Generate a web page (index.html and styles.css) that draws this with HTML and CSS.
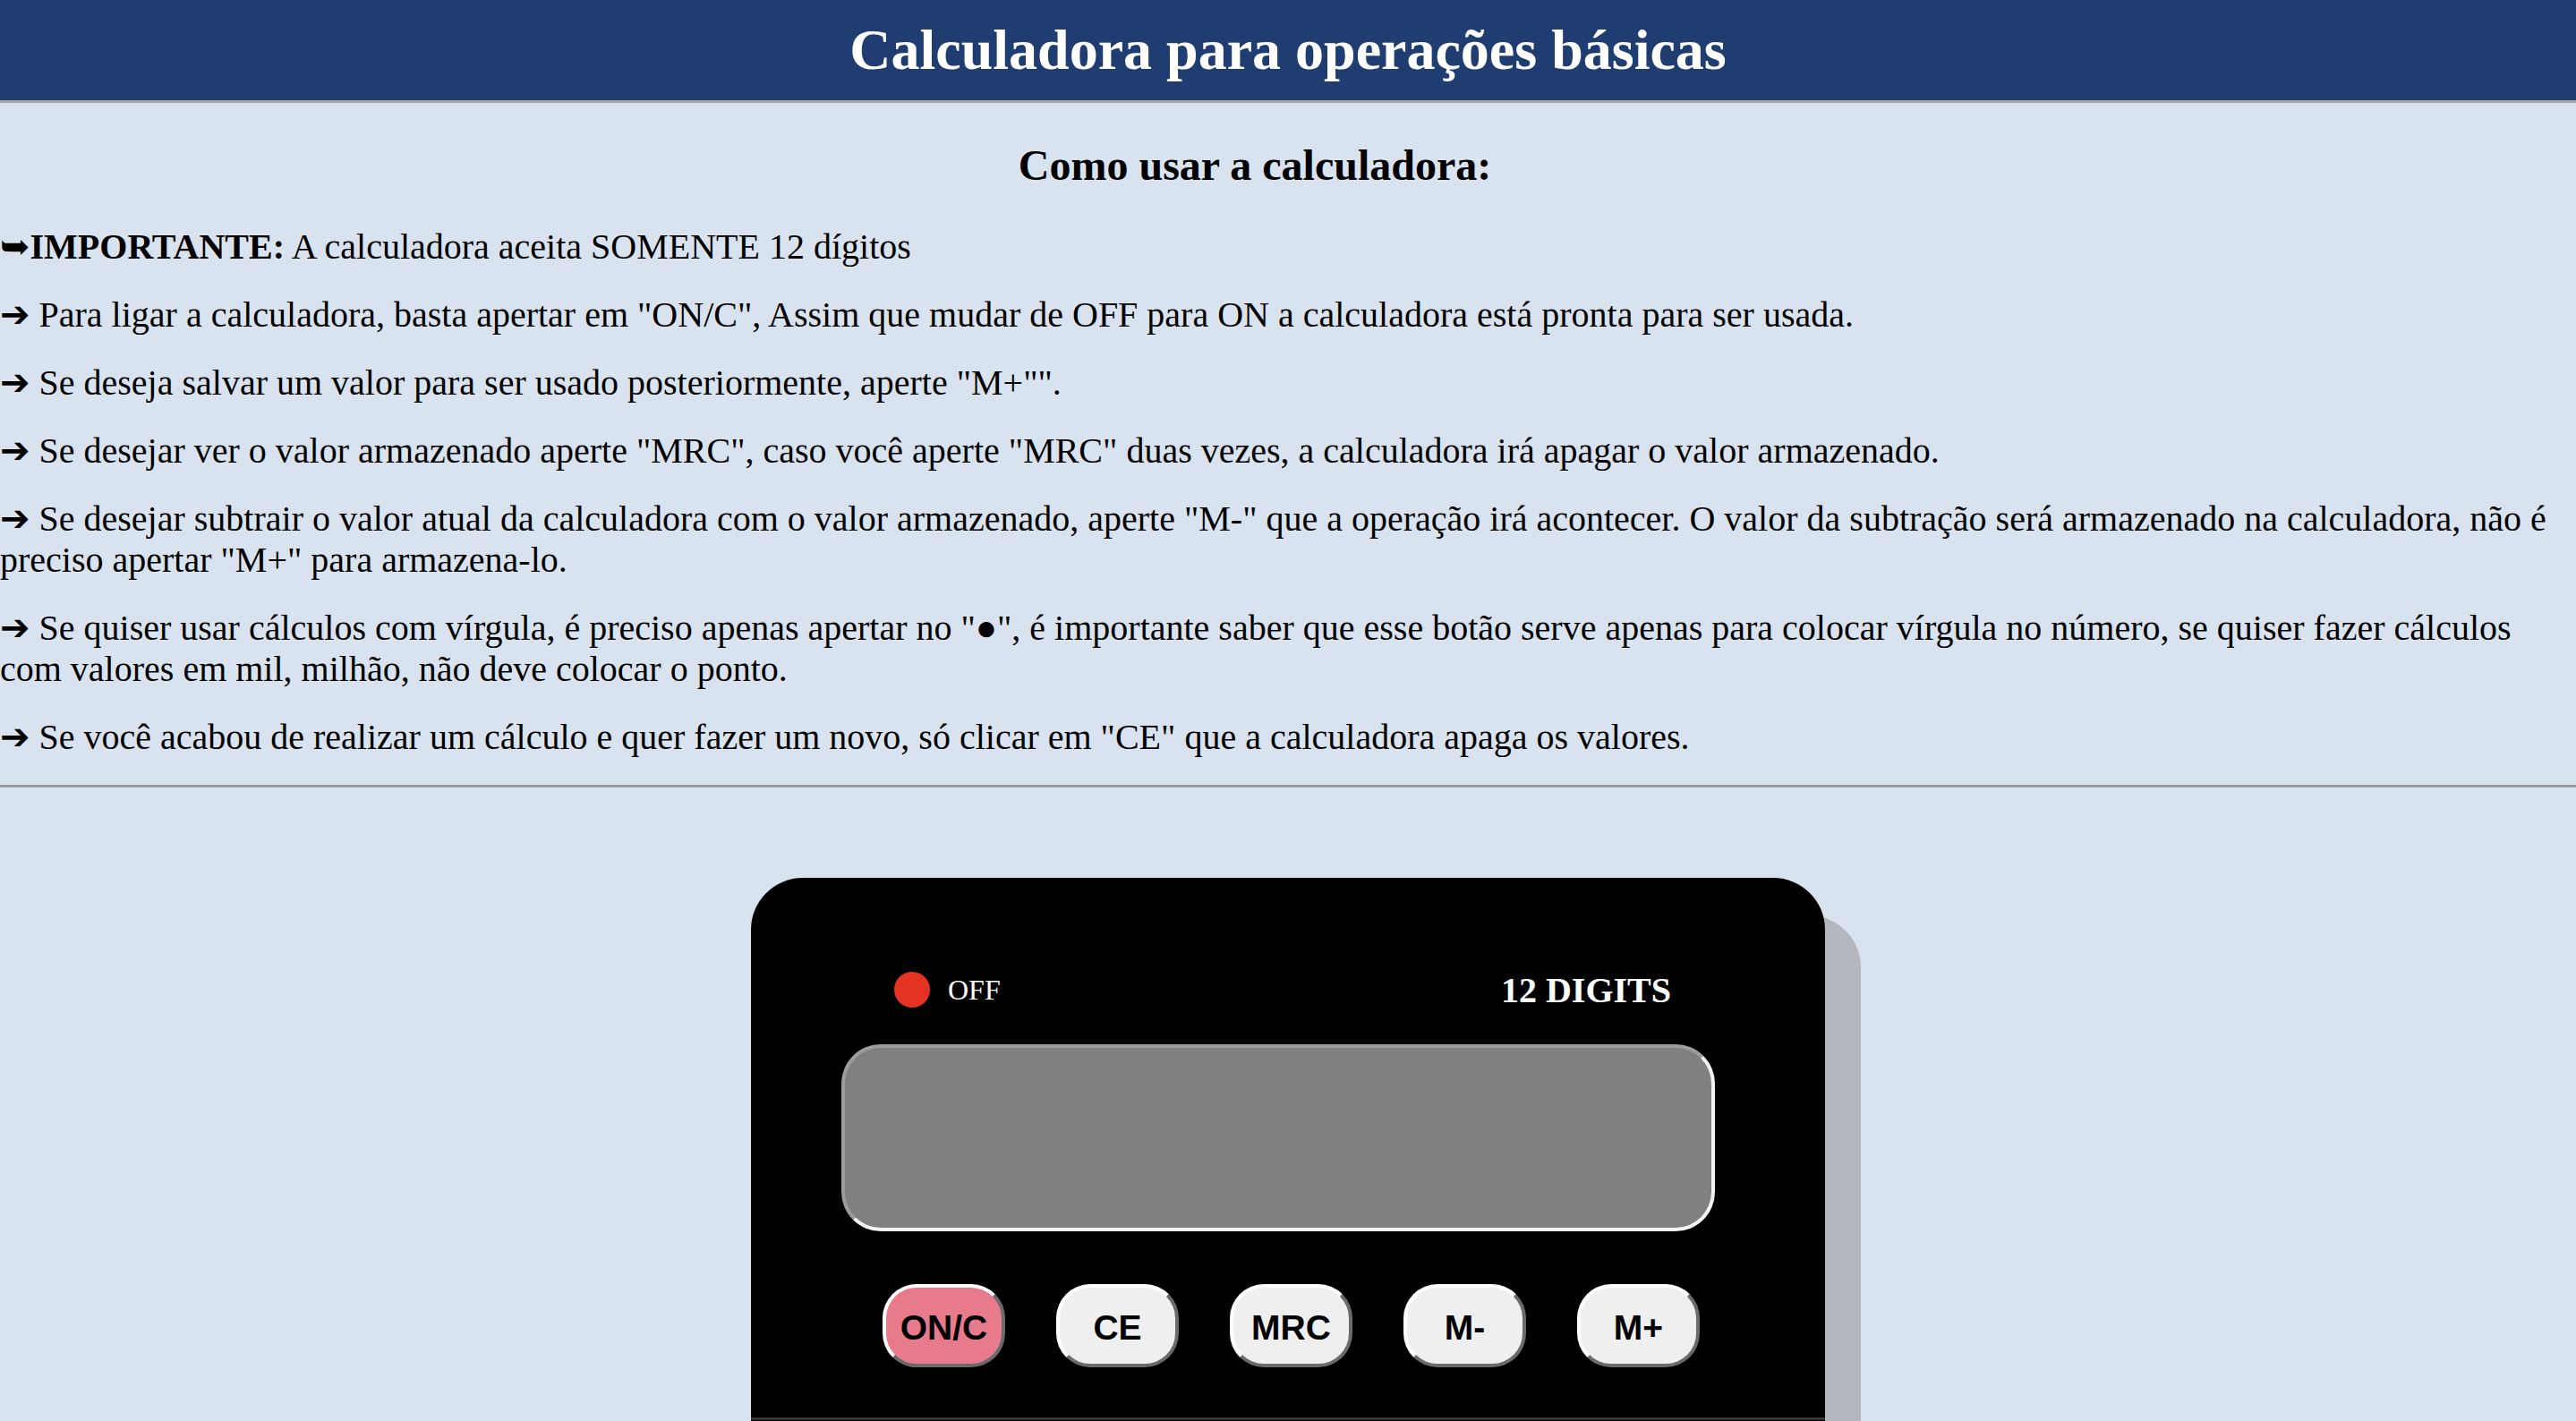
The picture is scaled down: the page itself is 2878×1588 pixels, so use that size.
FILE: index.html
```html
<!DOCTYPE html>
<html lang="pt-BR">
<head>
<meta charset="utf-8">
<title>Calculadora para operações básicas</title>
<link rel="stylesheet" href="styles.css">
</head>
<body>
<header class="topbar">
  <h1 class="title">Calculadora para operações básicas</h1>
</header>
<section class="guide">
  <h2 class="guide-title">Como usar a calculadora:</h2>
  <p class="tip"><span class="arrow">➥</span><strong>IMPORTANTE:</strong> A calculadora aceita SOMENTE 12 dígitos</p>
  <p class="tip"><span class="arrow">➔</span> Para ligar a calculadora, basta apertar em "ON/C", Assim que mudar de OFF para ON a calculadora está pronta para ser usada.</p>
  <p class="tip"><span class="arrow">➔</span> Se deseja salvar um valor para ser usado posteriormente, aperte "M+"".</p>
  <p class="tip"><span class="arrow">➔</span> Se desejar ver o valor armazenado aperte "MRC", caso você aperte "MRC" duas vezes, a calculadora irá apagar o valor armazenado.</p>
  <p class="tip"><span class="arrow">➔</span> Se desejar subtrair o valor atual da calculadora com o valor armazenado, aperte "M-" que a operação irá acontecer. O valor da subtração será armazenado na calculadora, não é preciso apertar "M+" para armazena-lo.</p>
  <p class="tip"><span class="arrow">➔</span> Se quiser usar cálculos com vírgula, é preciso apenas apertar no "●", é importante saber que esse botão serve apenas para colocar vírgula no número, se quiser fazer cálculos com valores em mil, milhão, não deve colocar o ponto.</p>
  <p class="tip"><span class="arrow">➔</span> Se você acabou de realizar um cálculo e quer fazer um novo, só clicar em "CE" que a calculadora apaga os valores.</p>
</section>
<hr class="divider">
<main class="stage">
  <div class="calc">
    <div class="calc-top">
      <div class="power">
        <span class="led"></span>
        <span class="power-label">OFF</span>
      </div>
      <span class="digits">12 DIGITS</span>
    </div>
    <div class="display"></div>
    <div class="keys">
      <button class="key key-on">ON/C</button>
      <button class="key">CE</button>
      <button class="key">MRC</button>
      <button class="key">M-</button>
      <button class="key">M+</button>
    </div>
    <div class="keypad"></div>
  </div>
</main>
</body>
</html>
```
FILE: styles.css
```css
html, body {
  margin: 0;
  padding: 0;
}
body {
  background: #d9e3ef;
  font-family: "Liberation Serif", "Times New Roman", serif;
  color: #000;
  overflow: hidden;
}
.topbar {
  background: #1f3d71;
  height: 112px;
  border-bottom: 3px solid #a4a6aa;
  display: flex;
  align-items: center;
  justify-content: center;
}
.title {
  margin: 0;
  color: #fff;
  font-size: 64px;
  font-weight: bold;
  line-height: 1;
}
.guide {
  padding-top: 42px;
}
.guide-title {
  margin: 0 0 41px;
  padding-right: 74px;
  text-align: center;
  font-size: 48px;
  font-weight: bold;
  line-height: 55px;
}
.tip {
  margin: 0 0 30px;
  font-size: 40px;
  line-height: 46px;
}
.tip:last-child {
  margin-bottom: 0;
}
.arrow {
  font-family: "DejaVu Sans", sans-serif;
  font-size: 40px;
  line-height: 40px;
}
.divider {
  margin: 30px 0 0;
  border: 0;
  border-top: 3px solid #9c9c9c;
  height: 0;
}
.stage {
  display: flex;
  justify-content: center;
  padding-top: 101px;
}
.calc {
  width: 1200px;
  height: 700px;
  background: #000;
  border-radius: 58px 58px 0 0;
  box-shadow: 40px 42px 0 #b4b8be;
  display: flex;
  flex-direction: column;
}
.calc-top {
  display: flex;
  justify-content: space-between;
  align-items: center;
  height: 40px;
  padding: 105px 172px 0 160px;
}
.power {
  display: flex;
  align-items: center;
  gap: 20px;
}
.led {
  width: 40px;
  height: 40px;
  border-radius: 50%;
  background: #e53323;
}
.power-label {
  color: #fff;
  font-size: 32px;
}
.digits {
  color: #fff;
  font-size: 40px;
  font-weight: bold;
}
.display {
  margin: 41px 0 0 101px;
  width: 976px;
  height: 209px;
  box-sizing: border-box;
  background: #808080;
  border: 4px solid;
  border-color: #9c9c9c #f2f2f2 #f2f2f2 #9c9c9c;
  border-radius: 44px;
}
.keys {
  display: flex;
  gap: 57px;
  margin-top: 59px;
  padding-left: 147px;
}
.key {
  width: 137px;
  height: 93px;
  box-sizing: border-box;
  border-radius: 38px;
  border: 4px solid;
  border-color: #ffffff #6a6a6a #6a6a6a #ffffff;
  background: #efefef;
  color: #000;
  font-family: "Liberation Sans", Arial, sans-serif;
  font-size: 39px;
  font-weight: bold;
  padding: 4px 0 0;
  display: flex;
  align-items: center;
  justify-content: center;
}
.key-on {
  background: #e77a8b;
}
.keypad {
  margin-top: 56px;
  border-top: 3px solid #333;
}
```
